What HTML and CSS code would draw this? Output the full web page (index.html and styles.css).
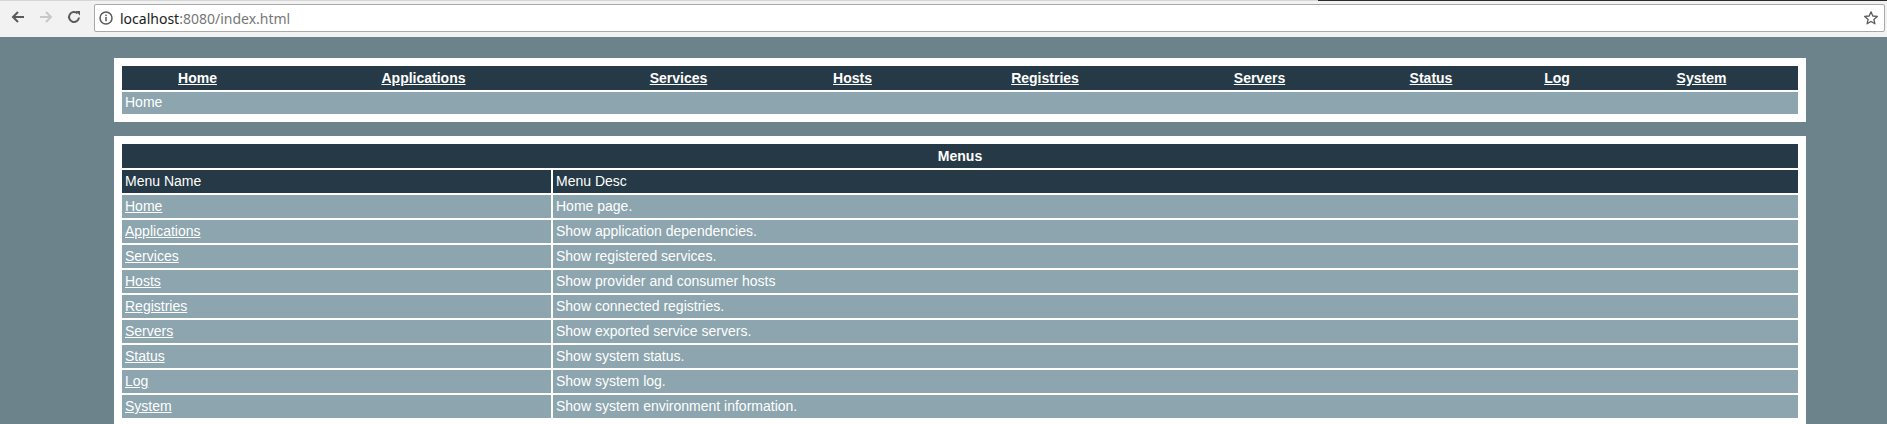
FILE: index.html
```html
<!DOCTYPE html>
<html>
<head>
<meta charset="utf-8">
<title>index</title>
<link rel="stylesheet" href="styles.css">
</head>
<body>
<div class="chrome">
  <div class="topline"></div>
  <div class="toolbar">
    <svg class="navbtn" width="16" height="16" viewBox="0 0 16 16"><path d="M14 8H3M8 3L3 8l5 5" fill="none" stroke="#5a5a5a" stroke-width="2"/></svg>
    <svg class="navbtn" width="16" height="16" viewBox="0 0 16 16"><path d="M2 8h11M8 3l5 5-5 5" fill="none" stroke="#c8c8c8" stroke-width="2"/></svg>
    <svg class="navbtn" width="16" height="16" viewBox="0 0 16 16"><path d="M13 8.5A5 5 0 1 1 11.5 4.4" fill="none" stroke="#5a5a5a" stroke-width="2"/><path d="M9.5 2h4.5v4.5z" fill="#5a5a5a"/></svg>
    <div class="omnibox">
      <svg class="info" width="14" height="14" viewBox="0 0 14 14"><circle cx="7" cy="7" r="6" fill="none" stroke="#5a5a5a" stroke-width="1.5"/><rect x="6.25" y="6" width="1.5" height="4.2" fill="#5a5a5a"/><rect x="6.25" y="3.6" width="1.5" height="1.5" fill="#5a5a5a"/></svg>
      <span class="host">localhost</span><span class="path">:8080/index.html</span>
      <svg class="star" width="16" height="16" viewBox="0 0 16 16"><path d="M8 1.8l1.8 4.2 4.5.4-3.4 3 1 4.4L8 11.5l-3.9 2.3 1-4.4-3.4-3 4.5-.4z" fill="none" stroke="#5a5a5a" stroke-width="1.3" stroke-linejoin="round"/></svg>
    </div>
  </div>
</div>

<div class="page">
  <div class="box navbox">
    <div class="navrow">
      <a href="#">Home</a>
      <a href="#">Applications</a>
      <a href="#">Services</a>
      <a href="#">Hosts</a>
      <a href="#">Registries</a>
      <a href="#">Servers</a>
      <a href="#">Status</a>
      <a href="#">Log</a>
      <a href="#">System</a>
    </div>
    <div class="crumb">Home</div>
  </div>

  <div class="box tablebox">
    <table class="menus">
      <tr><th colspan="2" class="title">Menus</th></tr>
      <tr class="head"><td class="c1">Menu Name</td><td>Menu Desc</td></tr>
      <tr><td><a href="#">Home</a></td><td>Home page.</td></tr>
      <tr><td><a href="#">Applications</a></td><td>Show application dependencies.</td></tr>
      <tr><td><a href="#">Services</a></td><td>Show registered services.</td></tr>
      <tr><td><a href="#">Hosts</a></td><td>Show provider and consumer hosts</td></tr>
      <tr><td><a href="#">Registries</a></td><td>Show connected registries.</td></tr>
      <tr><td><a href="#">Servers</a></td><td>Show exported service servers.</td></tr>
      <tr><td><a href="#">Status</a></td><td>Show system status.</td></tr>
      <tr><td><a href="#">Log</a></td><td>Show system log.</td></tr>
      <tr><td><a href="#">System</a></td><td>Show system environment information.</td></tr>
    </table>
  </div>
</div>
</body>
</html>
```

FILE: styles.css
```css
html, body {
  margin: 0;
  padding: 0;
  height: 100%;
  overflow: hidden;
}
body {
  font-family: "Liberation Sans", Arial, sans-serif;
  font-size: 14px;
  color: #fff;
  background: #6c838b;
}
.chrome {
  background: #f2f2f2;
  height: 37px;
  position: relative;
}
.topline {
  height: 1px;
  background: linear-gradient(to right, #d6d6d6 0, #d6d6d6 1318px, #2b2b2b 1318px, #2b2b2b 100%);
}
.toolbar {
  display: flex;
  align-items: center;
  height: 32px;
  padding-left: 10px;
}
.navbtn {
  flex: none;
  margin-right: 12px;
}
.omnibox {
  display: flex;
  align-items: center;
  box-sizing: border-box;
  width: 1791px;
  height: 28px;
  border: 1px solid #a9a9a9;
  border-radius: 2px;
  background: #fff;
  padding-left: 4px;
  font-family: "Noto Sans", "Open Sans", sans-serif;
  font-size: 14px;
  margin-top: 2px;
}
.info { flex: none; margin-right: 7px; }
.host { color: #202020; }
.path { color: #777; }
.star { margin-left: auto; margin-right: 5px; flex: none; }

.page {
  padding: 21px 0 0 114px;
}
.box {
  background: #fff;
  width: 1692px;
  box-sizing: border-box;
}
.navbox {
  padding: 8px;
  display: flex;
  flex-direction: column;
  gap: 2px;
}
.navrow {
  display: grid;
  grid-template-columns: 151px 301px 209px 139px 246px 183px 160px 92px 197px;
  background: #253a46;
  height: 24px;
  align-items: center;
  font-weight: bold;
}
.navrow a {
  justify-self: center;
  color: #fff;
  line-height: 16px;
}
.crumb {
  background: #8ca5ae;
  height: 22px;
  line-height: 21px;
  padding-left: 3px;
}
.tablebox {
  margin-top: 14px;
  padding: 6px;
}
.menus {
  border-spacing: 2px;
  width: 100%;
}
.menus td, .menus th {
  padding: 3px;
  line-height: 17px;
  text-align: left;
  background: #8ca5ae;
}
.menus th.title {
  background: #253a46;
  text-align: center;
  height: 18px;
  font-weight: bold;
}
.menus tr.head td {
  background: #253a46;
}
.menus td.c1 {
  width: 423px;
}
.menus a {
  color: #fff;
}
```
